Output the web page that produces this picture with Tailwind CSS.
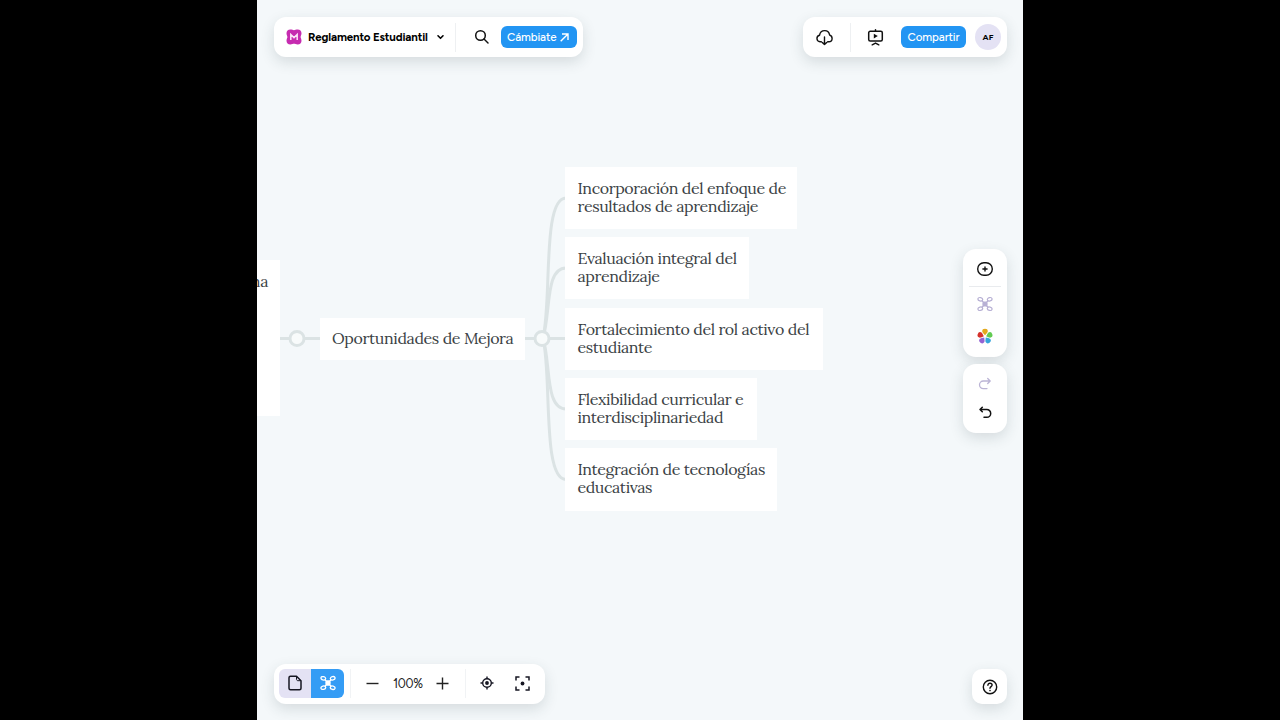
<!DOCTYPE html>
<html lang="es">
<head>
    <meta charset="UTF-8">
    <meta name="viewport" content="width=device-width, initial-scale=1.0">
    <title>Reglamento Estudiantil</title>
    <script src="https://cdn.jsdelivr.net/npm/@tailwindcss/browser@4"></script>
</head>
<body class="bg-black h-screen overflow-hidden font-['Figtree','Inter',sans-serif] text-black">
    <main class="relative w-[766px] h-[720px] ml-[257px] bg-[#f4f8fa] overflow-hidden">

        <!-- Mind map -->
        <section class="absolute inset-0 font-['Lora','Liberation_Serif',serif] text-[16px] leading-[18.8px] tracking-[-0.4px] text-[#3b4245] whitespace-nowrap">
            <svg class="absolute inset-0" width="766" height="720" viewBox="257 0 766 720" fill="none" stroke="#dbe3e4" stroke-width="3">
                <path d="M280 338.500H320M525 338.500H566"/>
                <path d="M543 338C552 300 542 198 566 198"/>
                <path d="M543 338C551 312 545 268 566 268"/>
                <path d="M543 338C551 365 545 409 566 409"/>
                <path d="M543 338C552 377 542 479.500 566 479.500"/>
                <circle cx="297" cy="338.500" r="7" fill="#f8fbfb"/>
                <circle cx="542" cy="338.500" r="7" fill="#f8fbfb"/>
            </svg>

            <div class="absolute left-[-177px] top-[260px] w-[200px] h-[156px] bg-white pt-3 pr-[12px] text-right">na</div>
            <div class="absolute left-[63px] top-[318px] w-[205px] h-[42px] bg-white pl-3 pt-[11px]">Oportunidades de Mejora</div>

            <div class="absolute left-[308px] top-[167px] w-[232px] h-[62px] bg-white pl-[12.500px] pt-[11.700px]">
                Incorporación del enfoque de<br>resultados de aprendizaje
            </div>
            <div class="absolute left-[308px] top-[237px] w-[184px] h-[62px] bg-white pl-[12.500px] pt-[11.700px]">
                Evaluación integral del<br>aprendizaje
            </div>
            <div class="absolute left-[308px] top-[308px] w-[258px] h-[62px] bg-white pl-[12.500px] pt-[11.700px]">
                Fortalecimiento del rol activo del<br>estudiante
            </div>
            <div class="absolute left-[308px] top-[378px] w-[192px] h-[62px] bg-white pl-[12.500px] pt-[11.700px]">
                Flexibilidad curricular e<br>interdisciplinariedad
            </div>
            <div class="absolute left-[308px] top-[448px] w-[212px] h-[63px] bg-white pl-[12.500px] pt-[11.700px]">
                Integración de tecnologías<br>educativas
            </div>
        </section>

        <!-- Shared icon shapes -->
        <svg class="absolute size-0">
            <defs>
                <path id="petal" d="M0-1.200C-1-2.800-2.800-3.600-2.800-5.200a2.600 2.300 0 0 1 5.600 0C2.800-3.600 1-2.800 0-1.200Z"/>
                <g id="map">
                    <path d="m4.800 4.500 6.400 7M11.200 4.500l-6.400 7"/>
                    <rect x="6" y="6" width="4" height="4" rx="1.300" fill="currentColor"/>
                    <ellipse cx="3.300" cy="3.300" rx="2.400" ry="1.700" transform="rotate(15 3.300 3.300)"/>
                    <ellipse cx="12.700" cy="3.300" rx="2.400" ry="1.700" transform="rotate(-15 12.700 3.300)"/>
                    <ellipse cx="3.300" cy="12.700" rx="2.400" ry="1.700" transform="rotate(-15 3.300 12.700)"/>
                    <ellipse cx="12.700" cy="12.700" rx="2.400" ry="1.700" transform="rotate(15 12.700 12.700)"/>
                </g>
            </defs>
        </svg>

        <!-- Top bars -->
        <header class="absolute top-[17px] left-[17px] right-4 flex justify-between">
            <div class="flex items-center w-[309px] h-10 pl-3 pr-1.5 rounded-xl bg-white shadow-[0_5px_14px_rgba(40,60,70,0.15)]">
                <svg class="shrink-0" width="16" height="16" viewBox="0 0 16 16">
                    <path fill="#c62bb0" d="M4.300.5C6 .500 7 1.200 8 1.200S10 .500 11.700.500c2.300 0 3.800 1.500 3.800 3.800C15.500 6 14.600 7 14.600 8s.9 2 .9 3.700c0 2.300-1.500 3.800-3.800 3.800-1.700 0-2.700-.7-3.700-.7s-2 .7-3.700.7C2 15.500.500 14 .500 11.700.500 10 1.400 9 1.400 8S.500 6 .500 4.300C.500 2 2 .500 4.300.500Z"/>
                    <path d="M4.800 11V5.500L8 8.600l3.200-3.100V11" fill="none" stroke="#fbe3f7" stroke-width="1.500"/>
                </svg>
                <h1 class="ml-1.5 pt-px w-[120px] text-[11.500px] font-bold tracking-[-0.14px] whitespace-nowrap">Reglamento Estudiantil</h1>
                <svg class="ml-2 shrink-0" width="9" height="8" viewBox="0 0 9 8" fill="none" stroke="#000" stroke-width="1.600" stroke-linecap="round" stroke-linejoin="round"><path d="M2 2.800 4.500 5.300 7 2.800"/></svg>
                <i class="ml-[10px] w-px h-[29px] bg-[#eef0f2]"></i>
                <svg class="ml-[18px] shrink-0" width="16" height="16" viewBox="0 0 16 16" fill="none" stroke="#111" stroke-width="1.500" stroke-linecap="round"><circle cx="6.500" cy="6.500" r="4.800"/><path d="m10 10 4 4"/></svg>
                <button class="flex items-center justify-between ml-auto w-[76px] h-[22px] pl-1.5 pr-2 rounded-md bg-[#2295f3] text-white text-[11.500px] font-medium">
                    <span class="pt-px tracking-[-0.1px]">Cámbiate</span>
                    <svg class="shrink-0" width="9" height="9" viewBox="0 0 9 9" fill="none" stroke="#fff" stroke-width="1.400"><path d="M.7 8.300 8 1M2 1h6v6"/></svg>
                </button>
            </div>

            <div class="flex items-center w-[204px] h-10 pl-[13px] pr-1.5 rounded-xl bg-white shadow-[0_5px_14px_rgba(40,60,70,0.15)]">
                <svg class="shrink-0" width="17" height="17" viewBox="0 0 17 17" fill="none" stroke="#111" stroke-width="1.400" stroke-linecap="round" stroke-linejoin="round">
                    <path d="M5.300 12.800H4A3.300 3.300 0 0 1 3.500 6.300C4 3.300 6 1.600 8.700 1.600c2.600 0 4.500 1.700 4.900 4.400 1.500.5 2.500 1.800 2.500 3.500 0 1.900-1.500 3.300-3.400 3.300h-1M8.500 8v7.500M6.300 13.400l2.200 2.200 2.200-2.200"/>
                </svg>
                <i class="ml-[17px] w-px h-[29px] bg-[#eef0f2]"></i>
                <svg class="ml-[16px] shrink-0" width="17" height="17" viewBox="0 0 17 17" fill="none" stroke="#111" stroke-width="1.500" stroke-linecap="round" stroke-linejoin="round">
                    <rect x="1.700" y="2.300" width="13.600" height="9.700" rx="1.500"/><path d="M8.500.8v1.500M5.200 15.800l3.300-1.700 3.300 1.700"/><path d="M6.800 4.800v4.600L10.800 7.100Z" fill="#111" stroke="none"/>
                </svg>
                <button class="ml-auto w-[65px] h-[22px] pt-px rounded-md bg-[#2295f3] text-white text-[11.500px] font-medium tracking-[-0.1px] whitespace-nowrap">Compartir</button>
                <span class="flex items-center justify-center ml-[9px] size-[26px] rounded-full bg-[#e4e2f4] text-[8.500px] font-bold">AF</span>
            </div>
        </header>

        <!-- Side tools -->
        <aside class="absolute top-[249px] right-4 w-[44px] flex flex-col gap-[7px]">
            <div class="flex flex-col items-center h-[108px] pt-[11px] rounded-[13px] bg-white shadow-[0_5px_14px_rgba(40,60,70,0.15)]">
                <svg width="18" height="18" viewBox="0 0 18 18" fill="none" stroke="#111" stroke-width="1.400" stroke-linecap="round"><rect x="1.700" y="2.700" width="14.600" height="12.600" rx="6.200"/><path d="M9 6.900v4.200M6.900 9h4.200"/></svg>
                <i class="mt-2 w-8 h-px bg-[#e9ebee]"></i>
                <svg class="mt-[9px] text-[#b7b0d4]" width="16" height="16" viewBox="0 0 16 16" fill="none" stroke="currentColor" stroke-width="1.200"><use href="#map"/></svg>
                <svg class="mt-4" width="16" height="17" viewBox="-8 -8 16 16">
                    <use href="#petal" fill="#e3a91c"/>
                    <use href="#petal" fill="#62cb52" transform="rotate(72)"/>
                    <use href="#petal" fill="#35a5dc" transform="rotate(144)"/>
                    <use href="#petal" fill="#9463d3" transform="rotate(216)"/>
                    <use href="#petal" fill="#d5312b" transform="rotate(288)"/>
                </svg>
            </div>
            <div class="flex flex-col items-center gap-[15px] h-[69px] pt-3 rounded-[13px] bg-white shadow-[0_5px_14px_rgba(40,60,70,0.15)]">
                <svg width="14" height="14" viewBox="0 0 14 14" fill="none" stroke="#bbb4d5" stroke-width="1.300" stroke-linecap="round" stroke-linejoin="round"><path d="M12 5H5.300a3.800 3.800 0 0 0 0 7.600H9M9.700 2.500 12.200 5 9.700 7.500"/></svg>
                <svg width="14" height="14" viewBox="0 0 14 14" fill="none" stroke="#111" stroke-width="1.500" stroke-linecap="round" stroke-linejoin="round"><path d="M2.500 4.500h6.300a3.900 3.900 0 0 1 0 7.800H6M4.300 2.200 2 4.500l2.300 2.300"/></svg>
            </div>
        </aside>

        <!-- Bottom bars -->
        <footer class="absolute top-[664px] left-[17px] right-4 flex items-end justify-between">
            <div class="flex items-center w-[271px] h-10 pl-[5px] pb-[2px] rounded-xl bg-white shadow-[0_5px_14px_rgba(40,60,70,0.15)]">
                <div class="flex w-[65px] h-[29px] shrink-0 rounded-md overflow-hidden">
                    <span class="flex items-center justify-center w-8 bg-[#e4e2f4]">
                        <svg width="16" height="16" viewBox="0 0 16 16" fill="none" stroke="#161622" stroke-width="1.500" stroke-linejoin="round"><path d="M3.500 1.200h6L14 5.700v7.600c0 .9-.6 1.500-1.500 1.500h-9c-.9 0-1.500-.6-1.500-1.500V2.700c0-.9.6-1.500 1.500-1.500Z"/><path d="M9.500 1.200v3c0 .9.600 1.500 1.500 1.500h3" stroke-width="1"/></svg>
                    </span>
                    <span class="flex items-center justify-center flex-1 bg-[#349cf5] text-white">
                        <svg width="16" height="16" viewBox="0 0 16 16" fill="none" stroke="currentColor" stroke-width="1.300"><use href="#map"/></svg>
                    </span>
                </div>
                <i class="ml-[6px] w-px h-[29px] bg-[#f1f3f5]"></i>
                <svg class="ml-[15px] shrink-0" width="13" height="13" viewBox="0 0 13 13" stroke="#222" stroke-width="1.400"><path d="M.5 6.500h12"/></svg>
                <span class="ml-[14px] pt-[2px] w-[30px] text-[12.500px] tracking-[-0.3px] text-[#1c1c1c] whitespace-nowrap">100%</span>
                <svg class="ml-[13px] shrink-0" width="13" height="13" viewBox="0 0 13 13" stroke="#222" stroke-width="1.400"><path d="M.5 6.500h12M6.500.500v12"/></svg>
                <i class="ml-4 w-px h-[29px] bg-[#f1f3f5]"></i>
                <svg class="ml-[14px] shrink-0" width="14" height="14" viewBox="0 0 14 14" fill="none" stroke="#161622" stroke-width="1.400"><circle cx="7" cy="7" r="4.300"/><circle cx="7" cy="7" r="1.900" fill="#161622" stroke="none"/><path d="M7 .500v2.200M7 11.300v2.200M.5 7h2.200M11.300 7h2.200"/></svg>
                <svg class="ml-[21px] shrink-0" width="15" height="15" viewBox="0 0 15 15" fill="none" stroke="#161622" stroke-width="1.500"><path d="M1 4.500V1h3.500M10.500 1H14v3.500M14 10.500V14h-3.500M4.500 14H1v-3.500"/><circle cx="7.500" cy="7.500" r="1.900" fill="#161622" stroke="none"/></svg>
            </div>
            <div class="flex items-center justify-center w-[35px] h-[35px] rounded-[10px] bg-white shadow-[0_5px_14px_rgba(40,60,70,0.15)]">
                <svg width="16" height="16" viewBox="0 0 16 16" fill="none" stroke="#111" stroke-width="1.400" stroke-linecap="round"><circle cx="8" cy="8" r="6.700"/><path d="M5.900 6.300C5.900 5 6.800 4.200 8 4.200s2.100.8 2.100 1.900C10.100 7.600 8 7.700 8 9.300"/><path d="M8 11.500v.1" stroke-width="1.600"/></svg>
            </div>
        </footer>
    </main>
</body>
</html>
